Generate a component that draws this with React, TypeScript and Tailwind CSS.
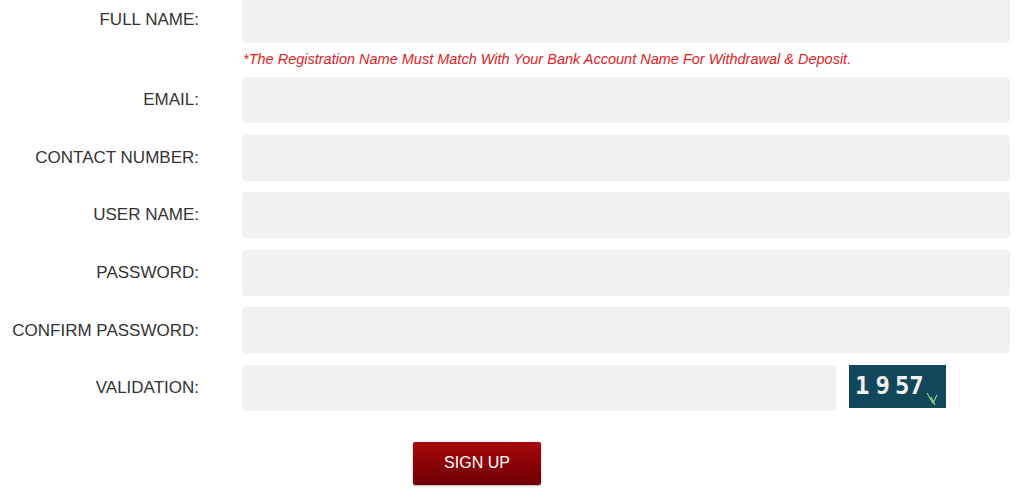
export default function App() {
  const rows = [
    { label: "FULL NAME:", note: true },
    { label: "EMAIL:" },
    { label: "CONTACT NUMBER:" },
    { label: "USER NAME:" },
    { label: "PASSWORD:" },
    { label: "CONFIRM PASSWORD:" },
  ]

  return (
    <div className="w-[1024px] h-[503px] overflow-hidden bg-white font-['Liberation_Sans',Arial,sans-serif]">
      <div className="-mt-[3px] flex flex-col">
        {rows.map((r) => (
          <div key={r.label} className={r.note ? "mb-[11px]" : "mb-[11.6px]"}>
            <div className="flex items-center">
              <label className="w-[199px] shrink-0 text-right text-[17px] text-[#333]">{r.label}</label>
              <input className="ml-[43px] h-[46px] w-[768px] rounded-[4px] bg-[#f1f1f1] outline-none" />
            </div>
            {r.note && (
              <p className="ml-[243px] mt-[5px] -mb-[4px] text-[14.5px] leading-[22px] italic text-[#e3211f]">
                *The Registration Name Must Match With Your Bank Account Name For Withdrawal &amp; Deposit.
              </p>
            )}
          </div>
        ))}
        <div className="flex items-center">
          <label className="w-[199px] shrink-0 text-right text-[17px] text-[#333]">VALIDATION:</label>
          <input className="ml-[43px] h-[46px] w-[594px] rounded-[4px] bg-[#f1f1f1] outline-none" />
          <div className="relative ml-[13px] flex h-[43px] w-[97px] items-center self-start bg-[#12475b] pl-[6px] font-['DejaVu_Sans_Mono',monospace] text-[24px] font-bold text-[#f2f2f2]">
            <span>1</span>
            <span className="ml-[6px]">9</span>
            <span className="ml-[5px]">5</span>
            <span>7</span>
            <svg className="absolute left-[76px] top-[26px]" width="18" height="16" viewBox="0 0 18 16">
              <path d="M2 2 L8 12 L12 4 M6 6 L10 14" stroke="#8bd17c" strokeWidth="1.2" fill="none" />
            </svg>
          </div>
        </div>
        <div className="mt-[31px] ml-[413px]">
          <button className="h-[43px] w-[128px] rounded-[2px] bg-gradient-to-b from-[#a8080d] to-[#6e0004] text-[16px] text-white shadow-[0_1px_2px_rgba(0,0,0,0.3)]">
            SIGN UP
          </button>
        </div>
      </div>
    </div>
  )
}
